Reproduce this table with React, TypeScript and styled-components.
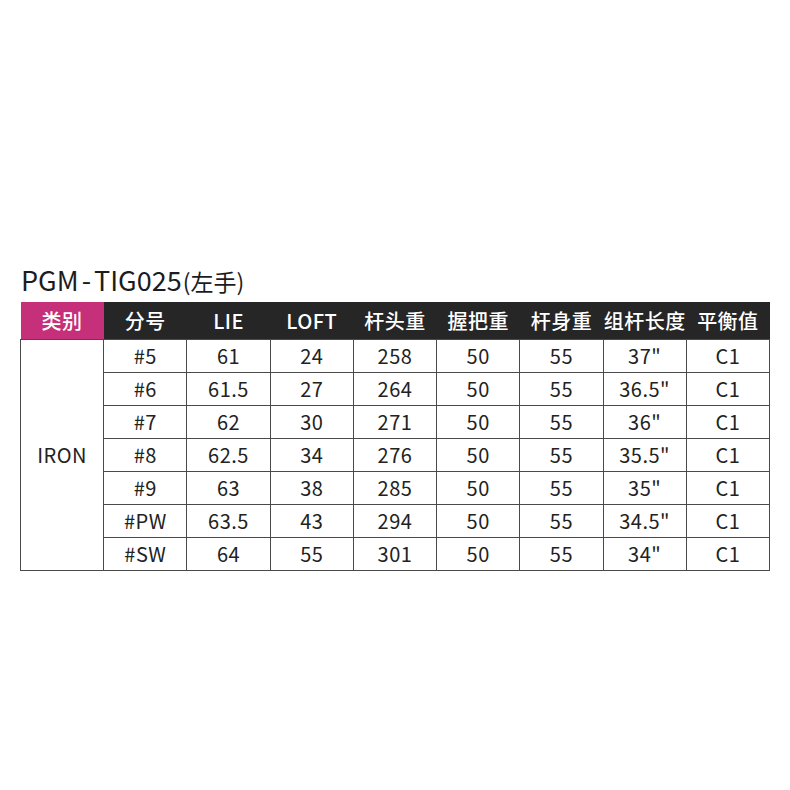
import React from 'react';
import styled, { createGlobalStyle } from 'styled-components';

const GlobalStyle = createGlobalStyle`
  body {
    margin: 0;
    background: #ffffff;
    font-family: "Noto Sans CJK SC", "Noto Sans", sans-serif;
    color: #222222;
  }
`;

const Page = styled.div`
  width: 790px;
  height: 790px;
  padding: 262px 20px 0;
  box-sizing: border-box;
`;

const Title = styled.h1`
  margin: 0 0 3px 1px;
  font-size: 27px;
  line-height: 36px;
  font-weight: 400;
  color: #1c1c1c;
`;

const Dash = styled.span`
  margin: 0 3px;
`;

const Note = styled.span`
  margin-left: 1px;
  font-size: 23px;
`;

const Table = styled.table`
  width: 750px;
  border-collapse: collapse;
  table-layout: fixed;
  text-align: center;
`;

const HeadCell = styled.th<{ $accent?: boolean }>`
  height: 37px;
  padding: 0;
  background: ${({ $accent }) => ($accent ? '#c62f79' : '#262626')};
  color: #ffffff;
  font-size: 20px;
  font-weight: 500;
  letter-spacing: 0.5px;
  white-space: nowrap;
  border: none;
`;

const Cell = styled.td`
  height: 32px;
  padding: 0;
  border: 1px solid #4a4a4a;
  font-size: 20px;
  line-height: 32px;
  color: #222222;
  letter-spacing: 0.5px;
  white-space: nowrap;
`;

const headers = ['分号', 'LIE', 'LOFT', '杆头重', '握把重', '杆身重', '组杆长度', '平衡值'];

const rows = [
  ['#5', '61', '24', '258', '50', '55', '37"', 'C1'],
  ['#6', '61.5', '27', '264', '50', '55', '36.5"', 'C1'],
  ['#7', '62', '30', '271', '50', '55', '36"', 'C1'],
  ['#8', '62.5', '34', '276', '50', '55', '35.5"', 'C1'],
  ['#9', '63', '38', '285', '50', '55', '35"', 'C1'],
  ['#PW', '63.5', '43', '294', '50', '55', '34.5"', 'C1'],
  ['#SW', '64', '55', '301', '50', '55', '34"', 'C1'],
];

export default function App() {
  return (
    <>
      <GlobalStyle />
      <Page>
        <Title>
          PGM<Dash>-</Dash>TIG025<Note>(左手)</Note>
        </Title>
        <Table>
          <thead>
            <tr>
              <HeadCell $accent>类别</HeadCell>
              {headers.map((h) => (
                <HeadCell key={h}>{h}</HeadCell>
              ))}
            </tr>
          </thead>
          <tbody>
            {rows.map((r, i) => (
              <tr key={r[0]}>
                {i === 0 && <Cell rowSpan={rows.length}>IRON</Cell>}
                {r.map((v, j) => (
                  <Cell key={j}>{v}</Cell>
                ))}
              </tr>
            ))}
          </tbody>
        </Table>
      </Page>
    </>
  );
}
